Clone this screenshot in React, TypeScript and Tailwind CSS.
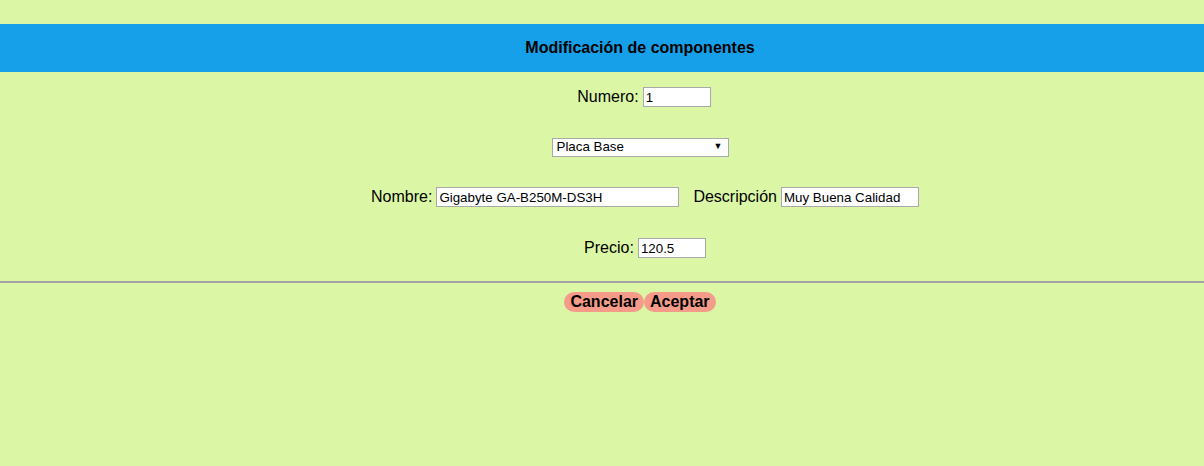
import React from "react";

export default function App() {
  const inputCls =
    "h-[20px] border border-[#a9a9a9] bg-white px-[2px] text-[13.33px] text-black outline-none";
  return (
    <div
      className="min-h-[466px] w-full bg-[#dbf7a6] pt-[24px] text-black"
      style={{ fontFamily: '"Liberation Sans", Arial, sans-serif' }}
    >
      <div className="flex h-[48px] items-center justify-center bg-[#17a0ea] pl-[76px]">
        <span className="text-[16px] font-bold">Modificación de componentes</span>
      </div>
      <div className="flex h-[50px] items-center justify-center pl-[84px] text-[16px]">
        <span className="mr-[4px]">Numero:</span>
        <input className={`${inputCls} w-[68px]`} defaultValue="1" readOnly />
      </div>
      <div className="flex h-[50px] items-center justify-center pl-[76px]">
        <div className="flex h-[19px] w-[177px] items-center justify-between border border-[#a9a9a9] bg-white pl-[4px] pr-[5px] text-[13.33px]">
          <span>Placa Base</span>
          <span className="text-[9px]">▼</span>
        </div>
      </div>
      <div className="flex h-[50px] items-center justify-center pl-[86px] text-[16px]">
        <span className="mr-[4px]">Nombre:</span>
        <input className={`${inputCls} w-[243px]`} defaultValue="Gigabyte GA-B250M-DS3H" readOnly />
        <span className="ml-[14px] mr-[4px]">Descripción</span>
        <input className={`${inputCls} w-[138px]`} defaultValue="Muy Buena Calidad" readOnly />
      </div>
      <div className="flex h-[50px] items-center justify-center pl-[86px] pt-[2px] text-[16px]">
        <span className="mr-[4px]">Precio:</span>
        <input className={`${inputCls} w-[68px]`} defaultValue="120.5" readOnly />
      </div>
      <div className="mt-[9px] h-[2px] w-full bg-[#a3a3a3]" />
      <div className="mt-[9px] flex items-center justify-center pl-[76px]">
        <button className="h-[20px] rounded-full bg-[#f59b8a] px-[6px] text-[16px] font-bold leading-none">
          Cancelar
        </button>
        <button className="h-[20px] rounded-full bg-[#f59b8a] px-[6px] text-[16px] font-bold leading-none">
          Aceptar
        </button>
      </div>
    </div>
  );
}
